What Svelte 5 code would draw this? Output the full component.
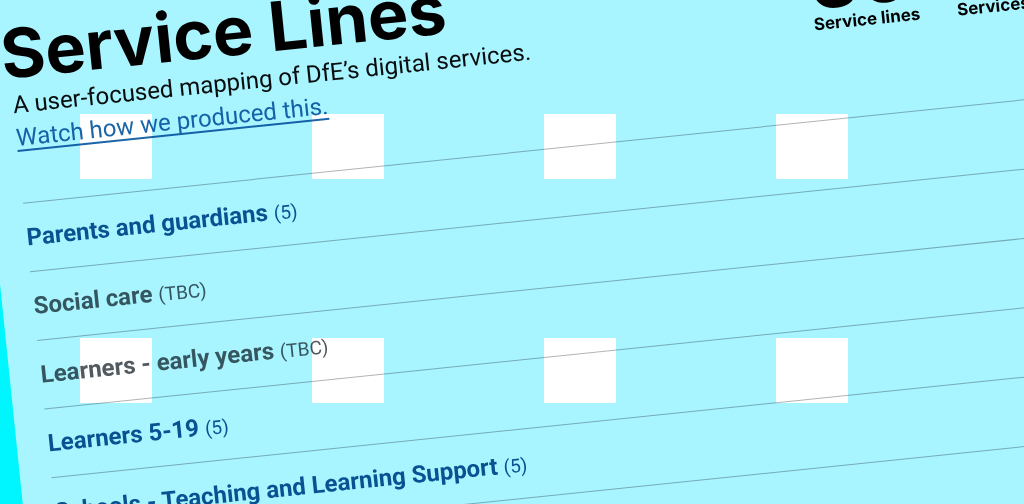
<script>
  const stats = [
    { value: '36', label: 'Service lines' },
    { value: '', label: 'Services' }
  ];
  const lines = [
    { name: 'Parents and guardians', count: '(5)', live: true },
    { name: 'Social care', count: '(TBC)', live: false },
    { name: 'Learners - early years', count: '(TBC)', live: false },
    { name: 'Learners 5-19', count: '(5)', live: true },
    { name: 'Schools - Teaching and Learning Support', count: '(5)', live: true }
  ];
  const tiles = Array.from({ length: 8 });
</script>

<main>
  <div class="sheet"></div>
  <div class="tiles" aria-hidden="true">
    {#each tiles as _}<span></span>{/each}
  </div>
  <div class="content">
    <header>
      <div class="intro">
        <h1>Service Lines</h1>
        <p>A user-focused mapping of DfE’s digital services.</p>
        <p><a href="#video">Watch how we produced this.</a></p>
      </div>
      <dl>
        {#each stats as stat}
          <div class="stat">
            <dd>{stat.value}</dd>
            <dt>{stat.label}</dt>
          </div>
        {/each}
      </dl>
    </header>
    <ul>
      {#each lines as line}
        <li>
          {#if line.live}
            <a class="name" href="#line">{line.name} <span>{line.count}</span></a>
          {:else}
            <div class="name muted">{line.name} <span>{line.count}</span></div>
          {/if}
        </li>
      {/each}
    </ul>
  </div>
</main>

<style>
  :global(body) {
    margin: 0;
    background: #00f6ff;
  }
  main {
    position: relative;
    min-height: 100vh;
    overflow: hidden;
    background: #00f6ff;
    font-family: Roboto, sans-serif;
    color: #0b0c0c;
  }
  .sheet,
  .content {
    position: absolute;
    top: 0;
    left: 0;
    width: 120%;
    transform: rotate(-5.9deg);
    transform-origin: 0 0;
  }
  .sheet {
    top: -200px;
    left: -50px;
    height: 300vh;
    background: #a8f4ff;
  }
  .tiles {
    position: absolute;
    top: 114px;
    left: 80px;
    display: grid;
    grid-template-columns: repeat(4, 72px);
    grid-auto-rows: 65px;
    gap: 159px 160px;
  }
  .tiles span {
    background: #fff;
  }
  .content {
    mix-blend-mode: multiply;
  }
  header {
    display: flex;
    height: 204px;
  }
  .intro {
    width: 807px;
    flex: none;
  }
  h1 {
    margin: 18px 0 0 -5px;
    font: 700 68px/72px Inter, sans-serif;
    color: #000;
  }
  p {
    margin: 0;
    padding-left: 2px;
    font-size: 24px;
    line-height: 33px;
  }
  p a {
    color: #1c65a6;
    text-decoration-thickness: 2px;
    text-decoration-skip-ink: none;
    text-underline-offset: 4px;
  }
  dl {
    display: grid;
    grid-template-columns: repeat(2, 144px);
    margin: 0;
    color: #000;
  }
  .stat {
    display: flex;
    flex-direction: column;
  }
  dd {
    height: 80px;
    margin: 16px 0 0;
    font: 700 76px/98px Inter, sans-serif;
  }
  dt {
    font: 700 17px/24px Inter, sans-serif;
  }
  ul {
    margin: 0 0 0 2px;
    padding: 0;
    list-style: none;
    border-bottom: 1px solid #b1b4b6;
  }
  li {
    border-top: 1px solid #b1b4b6;
    padding: 19px 0 17px;
    line-height: 31px;
  }
  .name {
    display: block;
    font-size: 24px;
    font-weight: 700;
    color: #0b5592;
    text-decoration: none;
  }
  .name span {
    font-size: 19px;
    font-weight: 400;
  }
  .muted {
    color: #505a5f;
  }
</style>
